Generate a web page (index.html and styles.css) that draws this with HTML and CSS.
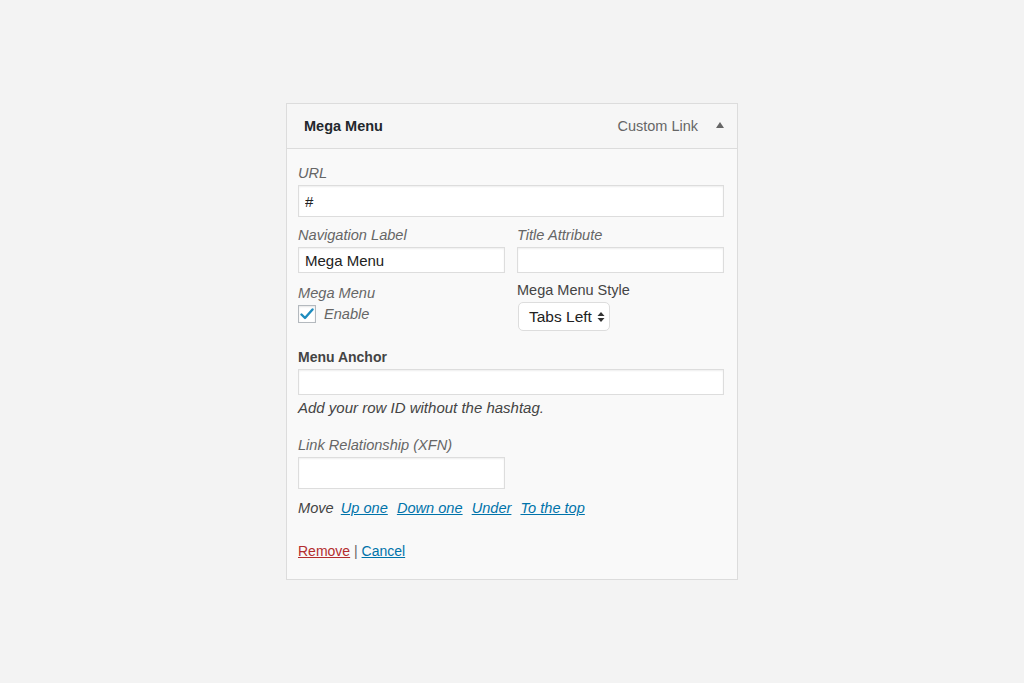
FILE: index.html
```html
<!DOCTYPE html>
<html>
  <head>
    <meta charset="UTF-8" />
    <title>Mega Menu</title>
    <link rel="stylesheet" href="styles.css">
  </head>
  <body>
    <div class="menu-item">
      <div class="item-bar">
        <span class="item-title">Mega Menu</span>
        <span class="item-type">Custom Link</span>
        <span class="item-arrow"></span>
      </div>
      <div class="item-settings">
        <div class="field field-wide">
          <label class="label-italic">URL</label>
          <input class="input-tall" type="text" value="#" />
        </div>
        <div class="field-row">
          <div class="field">
            <label class="label-italic">Navigation Label</label>
            <input type="text" value="Mega Menu" />
          </div>
          <div class="field">
            <label class="label-italic">Title Attribute</label>
            <input type="text" value="" />
          </div>
        </div>
        <div class="field-row field-row-options">
          <div class="field">
            <label class="label-italic">Mega Menu</label>
            <div class="check-row">
              <span class="checkbox">
                <svg width="14" height="12" viewBox="0 0 14 12">
                  <path d="M1.5 6.5 L5 10 L12.5 1.5" fill="none" stroke="#1e8cbe" stroke-width="2.4" stroke-linecap="round" stroke-linejoin="round"/>
                </svg>
              </span>
              <span class="label-italic">Enable</span>
            </div>
          </div>
          <div class="field">
            <label class="label-plain">Mega Menu Style</label>
            <div class="select">
              Tabs Left
              <svg width="8" height="12" viewBox="0 0 8 12">
                <path d="M4 1 L7.5 5 L0.5 5 Z M4 11 L7.5 7 L0.5 7 Z" fill="#333"/>
              </svg>
            </div>
          </div>
        </div>
        <div class="field field-anchor">
          <label class="label-bold">Menu Anchor</label>
          <input type="text" value="" />
          <p class="description">Add your row ID without the hashtag.</p>
        </div>
        <div class="field field-half">
          <label class="label-italic">Link Relationship (XFN)</label>
          <input class="input-tall" type="text" value="" />
        </div>
        <div class="move">
          <span class="move-label">Move</span>
          <a href="#">Up one</a>
          <a href="#">Down one</a>
          <a href="#">Under</a>
          <a href="#">To the top</a>
        </div>
        <div class="actions">
          <a class="remove" href="#">Remove</a> | <a class="cancel" href="#">Cancel</a>
        </div>
      </div>
    </div>
  </body>
</html>
```

FILE: styles.css
```css
body {
  background-color: #f3f3f3;
  margin: 0;
  font-family: "Liberation Sans", Arial, sans-serif;
  font-size: 14px;
  color: #444;
}

.menu-item {
  width: 450px;
  margin: 103px 0 0 286px;
  border: 1px solid #dcdcdc;
  background-color: #f9f9f9;
}

.item-bar {
  display: flex;
  align-items: center;
  height: 44px;
  padding: 0 13px 0 17px;
  background-color: #f6f6f6;
  border-bottom: 1px solid #dcdcdc;
  font-size: 14.5px;
}

.item-title {
  font-weight: bold;
  color: #23282d;
  flex: 1;
}

.item-type {
  color: #666;
  margin-right: 18px;
}

.item-arrow {
  width: 0;
  height: 0;
  border-left: 4px solid transparent;
  border-right: 4px solid transparent;
  border-bottom: 6px solid #666;
  margin-bottom: 2px;
}

.item-settings {
  padding: 16px 13px 20px 11px;
}

.field {
  display: flex;
  flex-direction: column;
}

.field label {
  line-height: 17px;
  margin-bottom: 3px;
}

.field-row {
  display: flex;
  gap: 12px;
  margin-top: 10px;
}

.field-row-options {
  margin-top: 12px;
}

.field-row .field {
  flex: 1;
}

.label-italic {
  font-style: italic;
  font-size: 14.6px;
  color: #666;
}

.label-plain {
  font-size: 14.5px;
  color: #444;
  margin-top: -3px;
}

.label-bold {
  font-weight: bold;
  color: #444;
}

input {
  font-family: "Liberation Sans", Arial, sans-serif;
  font-size: 15px;
  color: #222;
  height: 26px;
  box-sizing: border-box;
  border: 1px solid #ddd;
  box-shadow: inset 0 1px 2px rgba(0, 0, 0, 0.07);
  background-color: #fff;
  padding: 0 6px;
  margin: 0;
  width: 100%;
}

.input-tall {
  height: 32px;
}

.check-row {
  display: flex;
  align-items: center;
  gap: 8px;
  margin-top: 0;
}

.checkbox {
  display: flex;
  align-items: center;
  justify-content: center;
  width: 16px;
  height: 16px;
  border: 1px solid #b4b9be;
  background-color: #fff;
  box-shadow: inset 0 1px 2px rgba(0, 0, 0, 0.1);
}

.select {
  display: flex;
  align-items: center;
  gap: 5px;
  align-self: flex-start;
  height: 29px;
  box-sizing: border-box;
  padding: 0 4px 0 10px;
  font-size: 15.5px;
  color: #222;
  background-color: #fff;
  border: 1px solid #ddd;
  border-radius: 5px;
  margin-left: 1px;
}

.field-anchor {
  margin-top: 18px;
}

.description {
  margin: 4px 0 0 0;
  font-style: italic;
  font-size: 15px;
  color: #444;
}

.field-half {
  width: 207px;
  margin-top: 21px;
}

.move {
  margin-top: 11px;
  font-style: italic;
  font-size: 14.6px;
}

.move-label {
  margin-right: 3px;
}

.move a {
  color: #0073aa;
  margin-right: 5px;
}

.actions {
  margin-top: 27px;
  color: #666;
}

.actions a {
  text-decoration: underline;
}

.remove {
  color: #b32d2e;
}

.cancel {
  color: #0073aa;
}
```
